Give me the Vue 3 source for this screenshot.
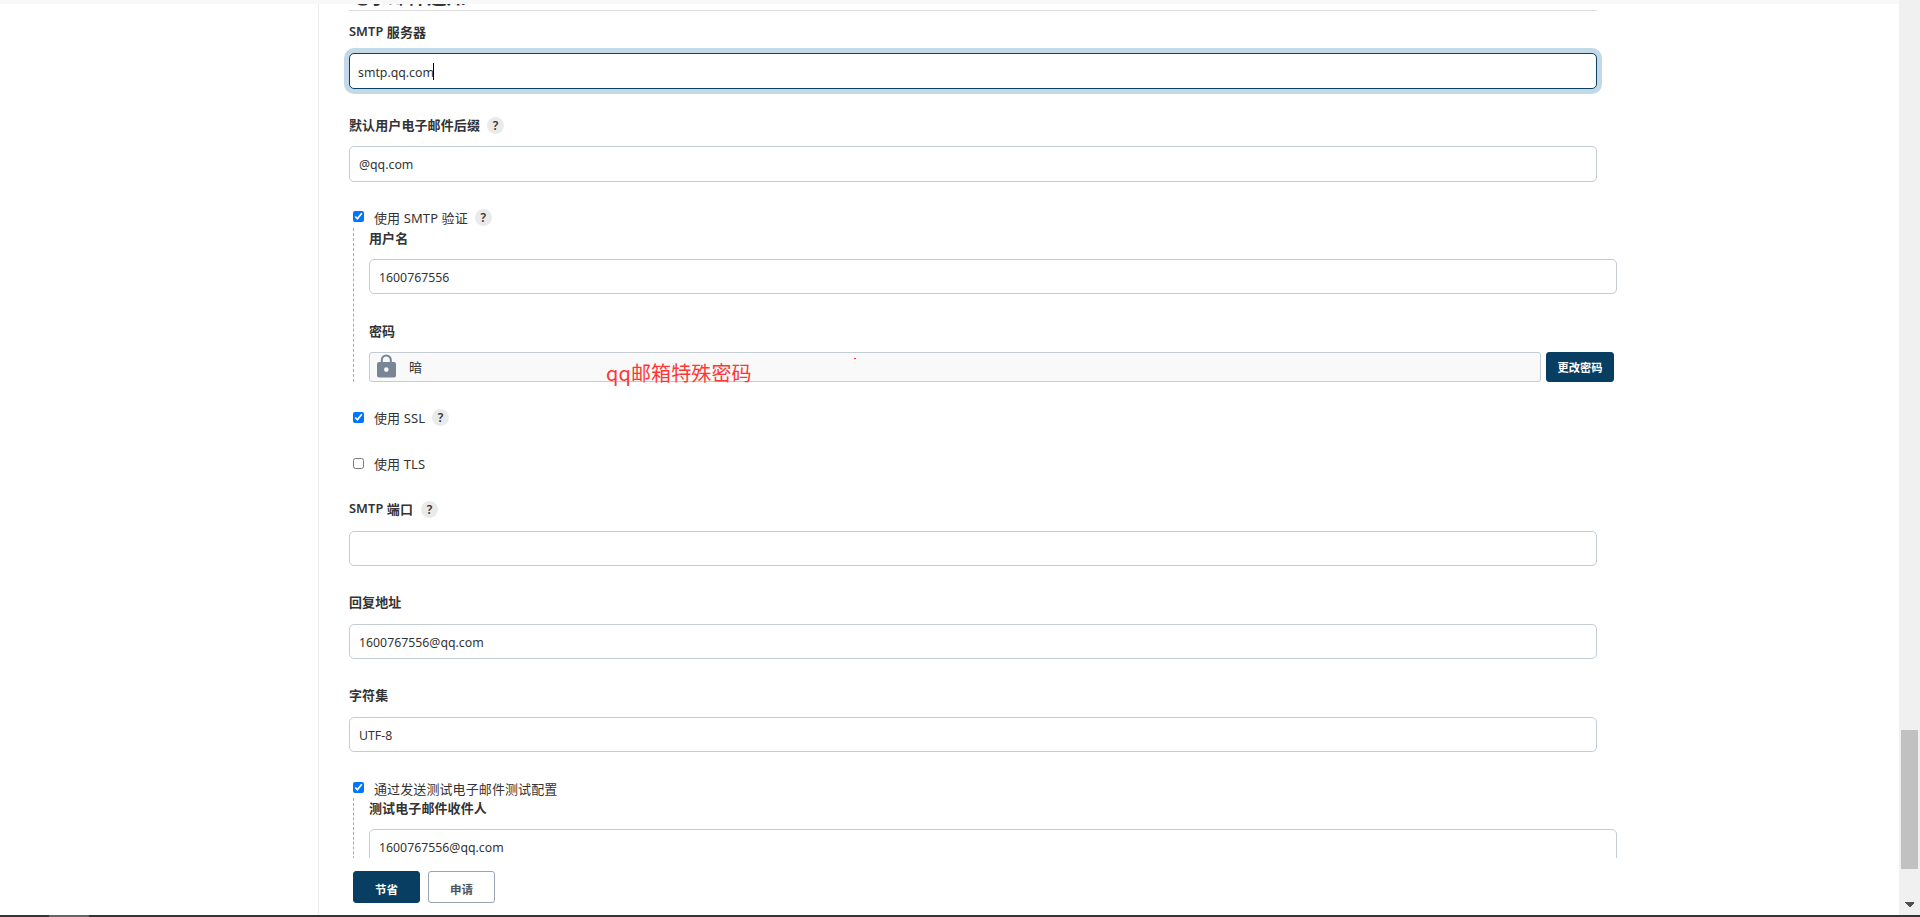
<template>
  <div class="page">
    <div class="page__top"></div>
    <div class="page__body">
      <aside class="side"></aside>

      <main class="main">
        <div class="config">
          <h2 class="config__title">电子邮件通知</h2>

          <div class="field field--first">
            <div class="label"><b class="latin">SMTP</b> 服务器</div>
            <div class="input-wrap">
              <input v-model="form.server" class="input input--tall input--focus" />
              <span class="caret"></span>
            </div>
          </div>

          <div class="field">
            <div class="label">默认用户电子邮件后缀<span class="help">?</span></div>
            <input v-model="form.suffix" class="input input--tall" />
          </div>

          <label class="check">
            <input v-model="form.useAuth" type="checkbox" />
            <span>使用 <i class="latin">SMTP</i> 验证</span><span class="help">?</span>
          </label>
          <div class="nested nested--auth">
            <div class="label">用户名</div>
            <input v-model="form.user" class="input" />
            <div class="label label--password">密码</div>
            <div class="secret">
              <div class="secret__box">
                <svg class="secret__icon" viewBox="0 0 19 24">
                  <path d="M4.8 9V5.9a4.5 4.5 0 0 1 9 0V9" fill="none" stroke="#788594" stroke-width="2" />
                  <rect x="0" y="8" width="19" height="15.5" rx="2" fill="#788594" />
                  <circle cx="9.3" cy="15.6" r="2.3" fill="#f9f9f9" />
                </svg>
                <span>暗</span>
                <span class="note">qq邮箱特殊密码</span>
                <span class="note-dot"></span>
              </div>
              <button class="btn btn--primary btn--small">更改密码</button>
            </div>
          </div>

          <label class="check check--ssl">
            <input v-model="form.ssl" type="checkbox" />
            <span>使用 <i class="latin">SSL</i></span><span class="help">?</span>
          </label>
          <label class="check check--tls">
            <input v-model="form.tls" type="checkbox" />
            <span>使用 <i class="latin">TLS</i></span>
          </label>

          <div v-for="f in plainFields" :key="f.key" class="field field--plain">
            <div class="label">
              <template v-if="f.prefix"><b class="latin">{{ f.prefix }}</b>&nbsp;</template>{{ f.label }}<span v-if="f.help" class="help">?</span>
            </div>
            <input v-model="form[f.key]" class="input" />
          </div>

          <label class="check check--test">
            <input v-model="form.test" type="checkbox" />
            <span>通过发送测试电子邮件测试配置</span>
          </label>
          <div class="nested nested--test">
            <div class="label">测试电子邮件收件人</div>
            <input v-model="form.recipient" class="input" />
          </div>
        </div>

        <div class="footer">
          <button class="btn btn--primary">节省</button>
          <button class="btn">申请</button>
        </div>
      </main>

      <div class="scrollbar">
        <div class="scrollbar__thumb"></div>
        <svg class="scrollbar__arrow" viewBox="0 0 9 5" shape-rendering="crispEdges">
          <path d="M0 0h9v1L5 5H4L0 1z" fill="#505050" />
        </svg>
      </div>
    </div>
    <div class="taskbar"><span class="taskbar__item"></span></div>
  </div>
</template>

<script setup>
import { reactive } from 'vue'

const form = reactive({
  server: 'smtp.qq.com',
  suffix: '@qq.com',
  useAuth: true,
  user: '1600767556',
  ssl: true,
  tls: false,
  port: '',
  reply: '1600767556@qq.com',
  charset: 'UTF-8',
  test: true,
  recipient: '1600767556@qq.com'
})

const plainFields = [
  { key: 'port', prefix: 'SMTP', label: '端口', help: true },
  { key: 'reply', label: '回复地址' },
  { key: 'charset', label: '字符集' }
]
</script>

<style>
body {
  overflow: hidden;
}
</style>

<style scoped>
* {
  box-sizing: border-box;
}

.page {
  width: 100vw;
  height: 917px;
  display: flex;
  flex-direction: column;
  background: #fff;
  color: #333;
  font-family: "Noto Sans", "Noto Sans CJK SC", sans-serif;
  font-size: 13px;
}

.page__top {
  height: 4px;
  flex: none;
  background: #f8f8f8;
  margin-right: 21px;
}

.page__body {
  height: 911px;
  display: flex;
}

.side {
  width: 319px;
  flex: none;
  border-right: 1px solid #eee;
}

.main {
  flex: 1;
  padding-left: 30px;
}

/* 滚动区域 */
.config {
  height: 854px;
  overflow: hidden;
  margin-left: -10px;
  padding-left: 10px;
}

.config__title {
  width: 1248px;
  height: 30px;
  margin: -23px 0 0;
  border-bottom: 1px solid #ddd;
  font-size: 19.5px;
  font-weight: 700;
  line-height: 32px;
  color: #333;
}

.field {
  width: 1248px;
  height: 93px;
}

.field--first {
  margin-top: 11px;
}

.label {
  display: flex;
  align-items: center;
  height: 20px;
  margin-bottom: 11px;
  padding-bottom: 2px;
  font-weight: 600;
  letter-spacing: 0.1px;
  white-space: pre;
}

.field--plain .label {
  padding-bottom: 4px;
}

.latin {
  font-size: 13px;
  font-style: normal;
}

.label .latin {
  font-size: 12.75px;
  font-weight: 600;
}

.help {
  width: 17px;
  height: 17px;
  margin-left: 7px;
  border-radius: 50%;
  background: #eaeaea;
  font-size: 12px;
  font-weight: 600;
  line-height: 17px;
  text-align: center;
}

.label .help {
  position: relative;
  top: 1px;
}

.field--plain .help {
  margin-left: 8px;
}

.input-wrap {
  position: relative;
}

.input {
  display: block;
  width: 1248px;
  height: 35px;
  padding: 2px 9px 0;
  border: 1px solid #c3ccd1;
  border-radius: 5px;
  outline: none;
  background: #fff;
  color: #333;
  font-family: inherit;
  font-size: 12.3px;
}

.input--tall {
  height: 36px;
  padding-top: 0;
}

.input--focus {
  padding-top: 2px;
  padding-left: 8px;
  border-color: #0b4064;
  box-shadow: 0 0 0 5px #c3d9e7;
}

.caret {
  position: absolute;
  left: 84px;
  top: 10px;
  width: 1px;
  height: 17px;
  background: #000;
}

.check {
  display: flex;
  align-items: center;
  height: 21px;
  margin-top: -1px;
  padding: 0 0 1px 4px;
}

.check input {
  width: 11px;
  height: 11px;
  margin: 0 10px 1px 0;
}

.check span {
  white-space: pre;
  letter-spacing: 0.1px;
}

.nested {
  width: 1266px;
  margin-left: 4px;
  padding-left: 15px;
  border-left: 1px dashed #aaa;
}

.nested--auth {
  height: 154px;
}

.nested .label {
  height: 21px;
  margin-bottom: 10px;
  padding-bottom: 3px;
}

.nested .label--password {
  margin-top: 27px;
}

.secret {
  display: flex;
  gap: 5px;
}

.secret__box {
  position: relative;
  display: flex;
  align-items: center;
  width: 1172px;
  height: 30px;
  padding: 0 0 2px 7px;
  border: 1px solid #c3ccd1;
  border-radius: 3px;
  background: #f9f9f9;
}

.secret__icon {
  width: 19px;
  height: 24px;
  margin-right: 13px;
}

.note {
  position: absolute;
  left: 236px;
  top: 5px;
  font-family: "Noto Sans CJK SC", sans-serif;
  font-size: 20px;
  font-weight: 400;
  letter-spacing: 0.1px;
  line-height: 30px;
  color: #ff3636;
}

.note-dot {
  position: absolute;
  left: 484px;
  top: 5px;
  width: 2px;
  height: 1px;
  background: #ff3636;
}

.btn {
  width: 67px;
  height: 32px;
  padding: 3px 0 0;
  border: 1px solid #98a5b0;
  border-radius: 3px;
  background: #fff;
  color: #4d545d;
  font-family: inherit;
  font-size: 11.5px;
  font-weight: 700;
}

.btn--primary {
  border-color: #073e61;
  background: #073e61;
  color: #fff;
}

.btn--small {
  width: 68px;
  height: 30px;
  padding-top: 0;
  font-size: 11.25px;
}

.check--ssl {
  margin-top: 26px;
}

.check--tls {
  margin-top: 25px;
  margin-bottom: 25px;
}

.check--ssl,
.check--tls {
  padding-bottom: 3px;
}

.check--ssl input,
.check--tls input {
  margin-bottom: 0;
  margin-top: 1px;
}

.check--test {
  margin-top: -1px;
  margin-bottom: -1px;
}

.footer {
  display: flex;
  gap: 8px;
  padding: 13px 0 0 4px;
}

.scrollbar {
  width: 21px;
  flex: none;
  display: flex;
  flex-direction: column;
  align-items: center;
  margin-top: -4px;
  background: #f0f0f0;
}

.scrollbar__thumb {
  width: 17px;
  height: 139px;
  margin: 730px 0 33px;
  background: #c1c1c1;
}

.scrollbar__arrow {
  width: 9px;
  height: 5px;
}

.taskbar {
  height: 2px;
  background: #333236;
}

.taskbar__item {
  display: block;
  width: 40px;
  height: 2px;
  margin-left: 49px;
  background: #666;
}
</style>
